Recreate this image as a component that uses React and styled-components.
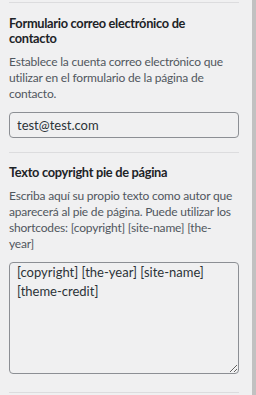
import React from "react";
import styled, { createGlobalStyle } from "styled-components";

const GlobalStyle = createGlobalStyle`
  html, body {
    margin: 0;
    padding: 0;
    background: #f0f0f1;
  }
  body {
    font-family: Lato, "Open Sans", sans-serif;
  }
`;

// outer frame: panel + thin scrollbar on the right
const Frame = styled.div`
  display: flex;
  width: 256px;
  height: 395px;
  overflow: hidden;
  background: #f0f0f1;
`;

const Panel = styled.div`
  flex: 1;
  padding: 2px 13px 0 9px;
`;

const Scrollbar = styled.div`
  width: 4px;
  background: #c1c1c1;
`;

const Control = styled.div`
  border-top: 1px solid #dcdcde;
  padding-top: ${(p) => p.$top ?? 13}px;
  padding-bottom: ${(p) => p.$bottom ?? 14}px;
`;

const Title = styled.div`
  max-width: 210px;
  font-size: 12.8px;
  font-weight: 700;
  line-height: 15px;
  letter-spacing: -0.3px;
  color: #1d2327;
  margin-bottom: 8px;
`;

const Description = styled.div`
  font-size: 12px;
  line-height: 16px;
  letter-spacing: -0.2px;
  color: #50575e;
  margin-bottom: 10px;
`;

const TextInput = styled.input`
  display: block;
  box-sizing: border-box;
  width: 100%;
  height: 26px;
  margin: 0;
  padding: 0 7px;
  border: 1px solid #8c8f94;
  border-radius: 4px;
  background: #f0f0f1;
  color: #2c3338;
  font-family: inherit;
  font-size: 13px;
  outline: none;
`;

const TextArea = styled.textarea`
  display: block;
  box-sizing: border-box;
  width: 100%;
  height: 112px;
  margin: 0;
  padding: 0 7px;
  border: 1px solid #8c8f94;
  border-radius: 4px;
  background: #f0f0f1;
  color: #2c3338;
  font-family: inherit;
  font-size: 13px;
  line-height: 19px;
  resize: vertical;
  outline: none;
`;

export default function App() {
  return (
    <Frame>
      <GlobalStyle />
      <Panel>
        <Control $top={13} $bottom={14}>
          <Title>Formulario correo electrónico de contacto</Title>
          <Description>
            Establece la cuenta correo electrónico que utilizar en el formulario
            de la página de contacto.
          </Description>
          <TextInput type="email" defaultValue="test@test.com" />
        </Control>
        <Control $top={12} $bottom={18}>
          <Title>Texto copyright pie de página</Title>
          <Description>
            Escriba aquí su propio texto como autor que aparecerá al pie de
            página. Puede utilizar los shortcodes: [copyright] [site-name] [the-
            <br />
            year]
          </Description>
          <TextArea defaultValue="[copyright] [the-year] [site-name] [theme-credit]" />
        </Control>
        <Control />
      </Panel>
      <Scrollbar />
    </Frame>
  );
}
